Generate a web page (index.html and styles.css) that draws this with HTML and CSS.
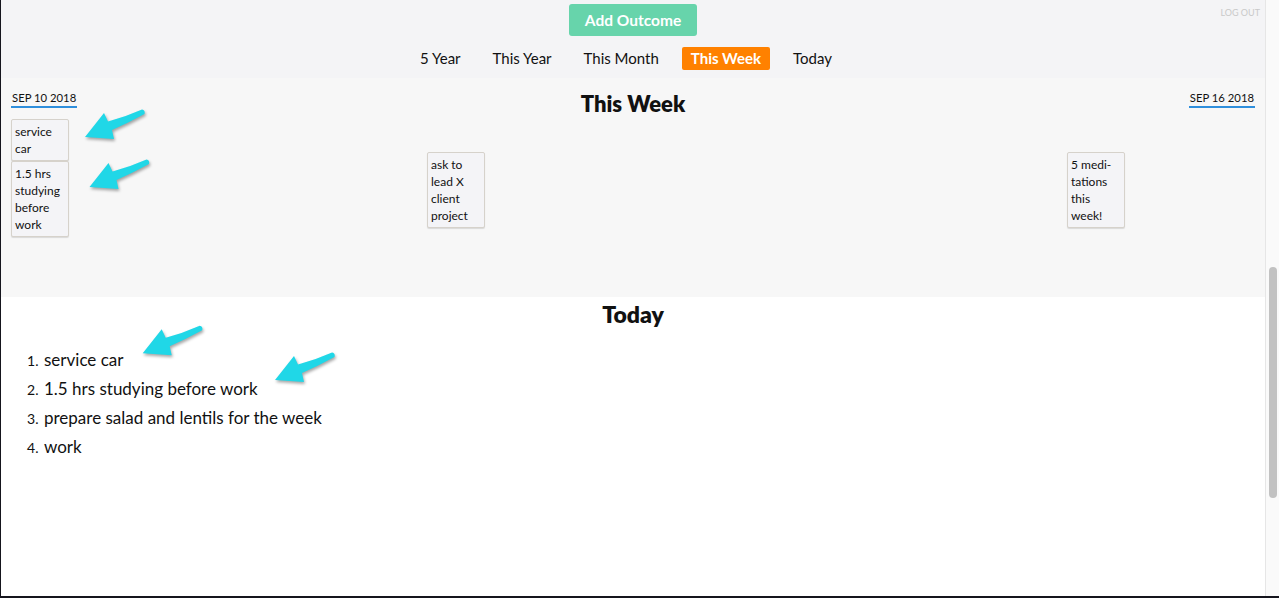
FILE: index.html
```html
<!DOCTYPE html>
<html lang="en">
<head>
<meta charset="utf-8">
<title>Outcomes</title>
<link rel="stylesheet" href="styles.css">
</head>
<body>
<div class="window">
  <main class="page">
    <header class="topbar">
      <div class="topbar-side"></div>
      <div class="topbar-center">
        <button class="add-btn">Add Outcome</button>
        <nav class="tabs">
          <a class="tab">5 Year</a>
          <a class="tab">This Year</a>
          <a class="tab">This Month</a>
          <a class="tab tab-active">This Week</a>
          <a class="tab">Today</a>
        </nav>
      </div>
      <div class="topbar-side topbar-right"><a class="logout">LOG OUT</a></div>
    </header>

    <section class="week">
      <div class="week-head">
        <div class="date-cell"><span class="date">SEP 10 2018</span></div>
        <h2 class="section-title">This Week</h2>
        <div class="date-cell date-right"><span class="date">SEP 16 2018</span></div>
      </div>
      <div class="days">
        <div class="day">
          <div class="card">service car</div>
          <div class="card">1.5 hrs studying before work</div>
        </div>
        <div class="day day-low">
          <div class="card">ask to lead X client project</div>
        </div>
        <div class="day day-low">
          <div class="card">5 medi-<br>tations this week!</div>
        </div>
      </div>
    </section>

    <section class="today">
      <h2 class="section-title today-title">Today</h2>
      <ol class="today-list">
        <li>service car</li>
        <li>1.5 hrs studying before work</li>
        <li>prepare salad and lentils for the week</li>
        <li>work</li>
      </ol>
    </section>
  </main>
  <div class="scrollbar"><div class="thumb"></div></div>

  <svg class="arrows" width="1265" height="596" viewBox="0 0 1265 596" aria-hidden="true">
    <defs>
      <path id="arrow" d="M0 0 L19 -24 L23 -15.5 Q40 -20 57 -27.5 Q60.5 -27 59.5 -23 Q43 -14 27 -7 L29 2 Z"/>
    </defs>
    <use href="#arrow" transform="translate(84 137)"/>
    <use href="#arrow" transform="translate(88.5 187)"/>
    <use href="#arrow" transform="translate(141.7 353.3)"/>
    <use href="#arrow" transform="translate(274 380)"/>
  </svg>
</div>
</body>
</html>
```

FILE: styles.css
```css
* { box-sizing: border-box; }

html, body {
  margin: 0;
  height: 598px;
  overflow: hidden;
}

body {
  background: #15151d;
  font-family: "Lato", "Liberation Sans", sans-serif;
  color: #111;
}

.window {
  position: relative;
  display: flex;
  height: 596px;
  margin-left: 1px;
  background: #fff;
}

.page {
  flex: 1;
  display: flex;
  flex-direction: column;
  background: #fff;
}

/* header */
.topbar {
  height: 78px;
  background: #f4f4f6;
  display: grid;
  grid-template-columns: 1fr auto 1fr;
}

.topbar-center {
  display: flex;
  flex-direction: column;
  align-items: center;
  padding-top: 4px;
}

.topbar-right {
  display: flex;
  justify-content: flex-end;
  align-items: flex-start;
  padding: 7px 5px 0 0;
}

.logout {
  font-size: 9px;
  color: #c9c9c9;
}

.add-btn {
  width: 128px;
  height: 32px;
  border: none;
  border-radius: 3px;
  background: #67d4ab;
  color: #fff;
  font-family: inherit;
  font-weight: 700;
  font-size: 15.5px;
  padding: 0;
}

.tabs {
  display: flex;
  gap: 14px;
  margin-top: 11px;
  padding-right: 14px;
}

.tab {
  display: block;
  height: 23px;
  line-height: 23px;
  padding: 0 9px;
  font-size: 15px;
  color: #111;
  border-radius: 2px;
}

.tab-active {
  background: #ff8100;
  color: #fff;
  font-weight: 700;
}

/* week */
.week {
  height: 219px;
  background: #f7f7f7;
  padding: 12px 10px 0 10px;
}

.week-head {
  display: grid;
  grid-template-columns: 1fr auto 1fr;
  align-items: start;
}

.date-cell {
  margin-top: -4px;
}

.date-right {
  text-align: right;
}

.date {
  display: inline-block;
  font-size: 11.3px;
  line-height: 14px;
  padding: 0 1px 1px;
  border-bottom: 2px solid #2f8fdc;
}

.section-title {
  margin: 0;
  font-size: 22px;
  line-height: 28px;
  font-weight: 800;
  text-align: center;
}

.today-title {
  font-size: 23px;
}

.days {
  display: grid;
  grid-template-columns: 416px 640px 58px;
  margin-top: 1px;
}

.day {
  display: flex;
  flex-direction: column;
}

.day-low {
  padding-top: 33px;
}

.card {
  width: 58px;
  background: #f4f4f7;
  border: 1px solid #d6d2cb;
  border-radius: 2px;
  box-shadow: 0 1px 1px rgba(0, 0, 0, 0.12);
  padding: 3px;
  font-size: 12px;
  line-height: 17px;
  color: #111;
}

/* today */
.today {
  flex: 1;
  background: #fff;
  padding-top: 3px;
}

.today-list {
  list-style: none;
  counter-reset: item;
  margin: 17px 0 0;
  padding-left: 26px;
  font-size: 17px;
  line-height: 29px;
}

.today-list li {
  counter-increment: item;
  height: 29px;
  white-space: nowrap;
}

.today-list li::before {
  content: counter(item) ".";
  display: inline-block;
  width: 17px;
  font-size: 14px;
  line-height: 1;
}

/* scrollbar */
.scrollbar {
  width: 14px;
  background: #fafafa;
  border-left: 1px solid #e6e6e6;
  padding: 267px 0 0 3px;
}

.thumb {
  width: 8px;
  height: 231px;
  border-radius: 4px;
  background: #c2c2c2;
}

/* annotation arrows */
.arrows {
  position: absolute;
  left: 0;
  top: 0;
  pointer-events: none;
  fill: #20d7e7;
  filter: drop-shadow(1px 2px 1.5px rgba(0, 0, 0, 0.35));
}
```
